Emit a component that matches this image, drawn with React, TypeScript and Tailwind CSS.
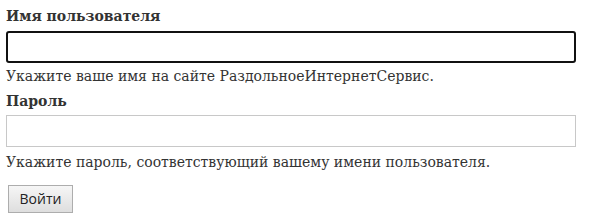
import React from "react";

export default function App() {
  return (
    <div className="w-[600px] h-[224px] bg-white pl-[6px] pt-[6px] text-[#333] text-[14px] leading-[20px]" style={{ fontFamily: '"DejaVu Serif", serif' }}>
      <label className="block font-bold">Имя пользователя</label>
      <input
        type="text"
        className="mt-[5px] block w-[570px] h-[32px] rounded-[3px] border-2 border-[#111] outline-none"
      />
      <div className="mt-[3px]">Укажите ваше имя на сайте РаздольноеИнтернетСервис.</div>
      <label className="mt-[5px] block font-bold">Пароль</label>
      <input
        type="password"
        className="mt-[4px] block w-[570px] h-[32px] border border-[#c8c8c8] outline-none"
      />
      <div className="mt-[5px]">Укажите пароль, соответствующий вашему имени пользователя.</div>
      <button
        className="mt-[13px] ml-[2px] block w-[65px] h-[28px] border border-[#adadad] bg-gradient-to-b from-[#f6f6f6] to-[#dedede] text-[#222] text-[14px]"
        style={{ fontFamily: '"Open Sans", sans-serif' }}
      >
        Войти
      </button>
    </div>
  );
}
